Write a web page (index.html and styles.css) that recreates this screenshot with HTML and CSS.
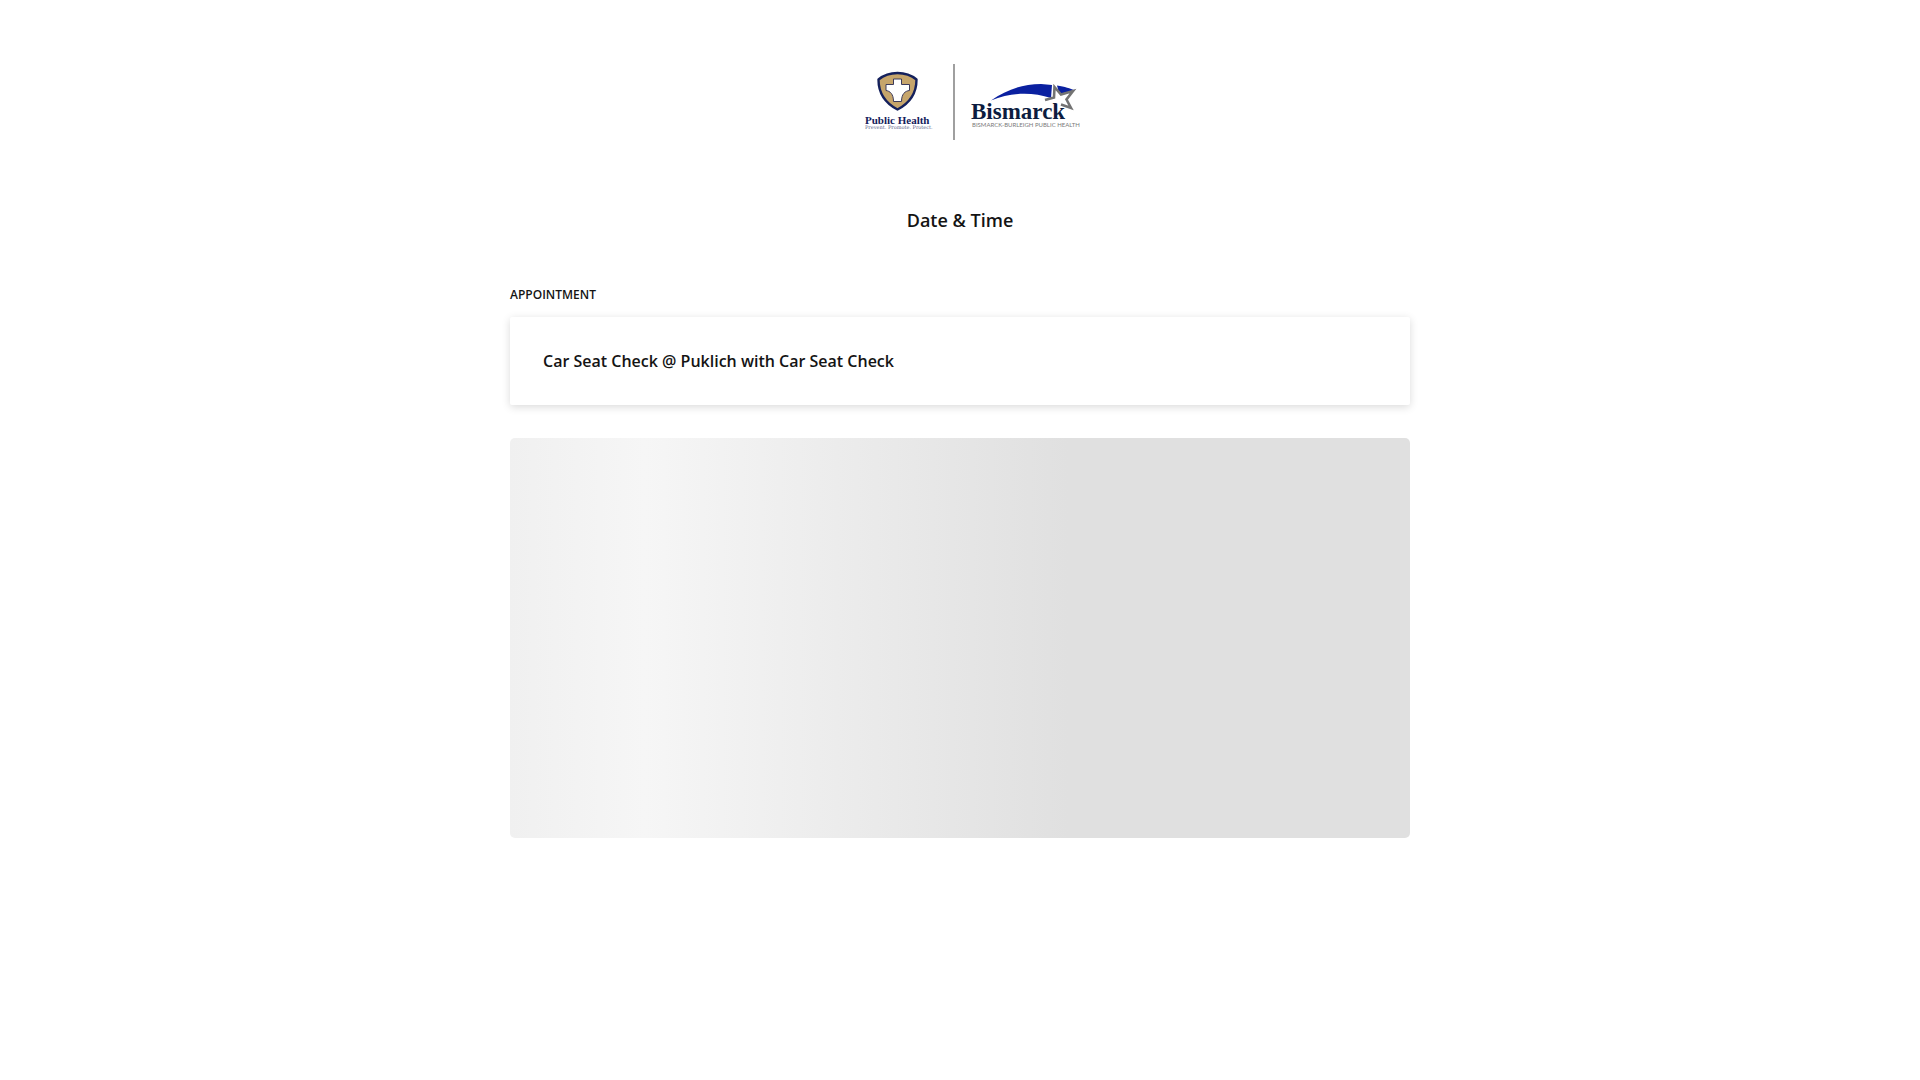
FILE: index.html
```html
<!DOCTYPE html>
<html lang="en">
<head>
    <meta charset="UTF-8">
    <meta name="viewport" content="width=device-width, initial-scale=1.0">
    <title>Date &amp; Time</title>
    <link rel="stylesheet" href="styles.css">
</head>
<body>

    <header class="header">
        <svg class="logo" viewBox="0 0 240 90" role="img" aria-label="Bismarck-Burleigh Public Health">
            <!-- shield -->
            <path d="M57.500 17C51 17 44 19 38.500 23.500C38.500 36 45 47 57.500 53.500C70 47 76.500 36 76.500 23.500C71 19 64 17 57.500 17Z" fill="#c6a56b" stroke="#14205c" stroke-width="2.400" stroke-linejoin="round"/>
            <path d="M53.500 23H61.500V28.500H69.500V34.500C65 35 61.500 38 61.500 45.500H53.500C53.500 38 50 35 46 34.500V28.500H53.500Z" fill="#fff" stroke="#3c3a5a" stroke-width="1"/>
            <text class="logo-health" x="25" y="68">Public Health</text>
            <text class="logo-motto" x="25" y="73">Prevent. Promote. Protect.</text>

            <path d="M114 8V84" stroke="#777" stroke-width="1.400"/>

            <!-- swoosh and star -->
            <path d="M151 44.500C166 34 182 28 201 28L212 29L211 42C192 36 172 36 151 44.500Z" fill="#0a20a0"/>
            <path d="M217 29.500C225 31 230 32 235 34.500L224 37L219 37Z" fill="#0a20a0"/>
            <text class="logo-city" x="131" y="63">Bismarck</text>
            <path d="M205 44L214 41.500L214.500 31L221 38.500L233 35L226.500 43.500L231 52L221 48.500" fill="#fff" stroke="#737373" stroke-width="2.600"/>
            <text class="logo-dept" x="132" y="71">BISMARCK-BURLEIGH PUBLIC HEALTH</text>
        </svg>
        <h1 class="title">Date &amp; Time</h1>
    </header>

    <main class="content">
        <h2 class="label">Appointment</h2>
        <div class="card">Car Seat Check @ Puklich with Car Seat Check</div>
        <div class="skeleton"></div>
    </main>

</body>
</html>
```

FILE: styles.css
```css
body {
    margin: 0;
    background: #fff;
    color: #141414;
    font-family: "Open Sans", sans-serif;
    font-size: 16px;
    font-weight: 600;
}
.header {
    display: flex;
    flex-direction: column;
    align-items: center;
    gap: 60px;
    padding: 56px 16px 0;
}
.logo {
    width: 240px;
    height: 90px;
}
.logo-health {
    fill: #14205c;
    font-family: "Liberation Serif", serif;
    font-size: 11px;
    font-weight: bold;
}
.logo-motto {
    fill: #5a6088;
    font-family: "DejaVu Serif", serif;
    font-size: 5px;
    font-weight: normal;
}
.logo-city {
    fill: #0c1c40;
    font-family: "Liberation Serif", serif;
    font-size: 23px;
    font-weight: bold;
}
.logo-dept {
    fill: #7a7a7a;
    font-family: Lato, sans-serif;
    font-size: 6px;
    font-weight: normal;
}
.title {
    margin: 0;
    font-size: 18px;
    font-weight: 600;
    line-height: 28px;
}
.content {
    box-sizing: border-box;
    max-width: 932px;
    margin: 0 auto;
    padding: 51px 16px;
}
.label {
    margin: 0 0 12px;
    font-size: 12px;
    font-weight: 600;
    line-height: 20px;
    text-transform: uppercase;
}
.card {
    padding: 32px 33px;
    background: #fff;
    border-radius: 2px;
    box-shadow: 0 2px 8px rgba(0, 0, 0, 0.15);
    line-height: 24px;
}
/* loading placeholder for the calendar */
.skeleton {
    height: 400px;
    margin-top: 33px;
    border-radius: 5px;
    background: linear-gradient(to right, #f0f0f0 0%, #f6f6f6 15%, #e0e0e0 62%);
}
```
